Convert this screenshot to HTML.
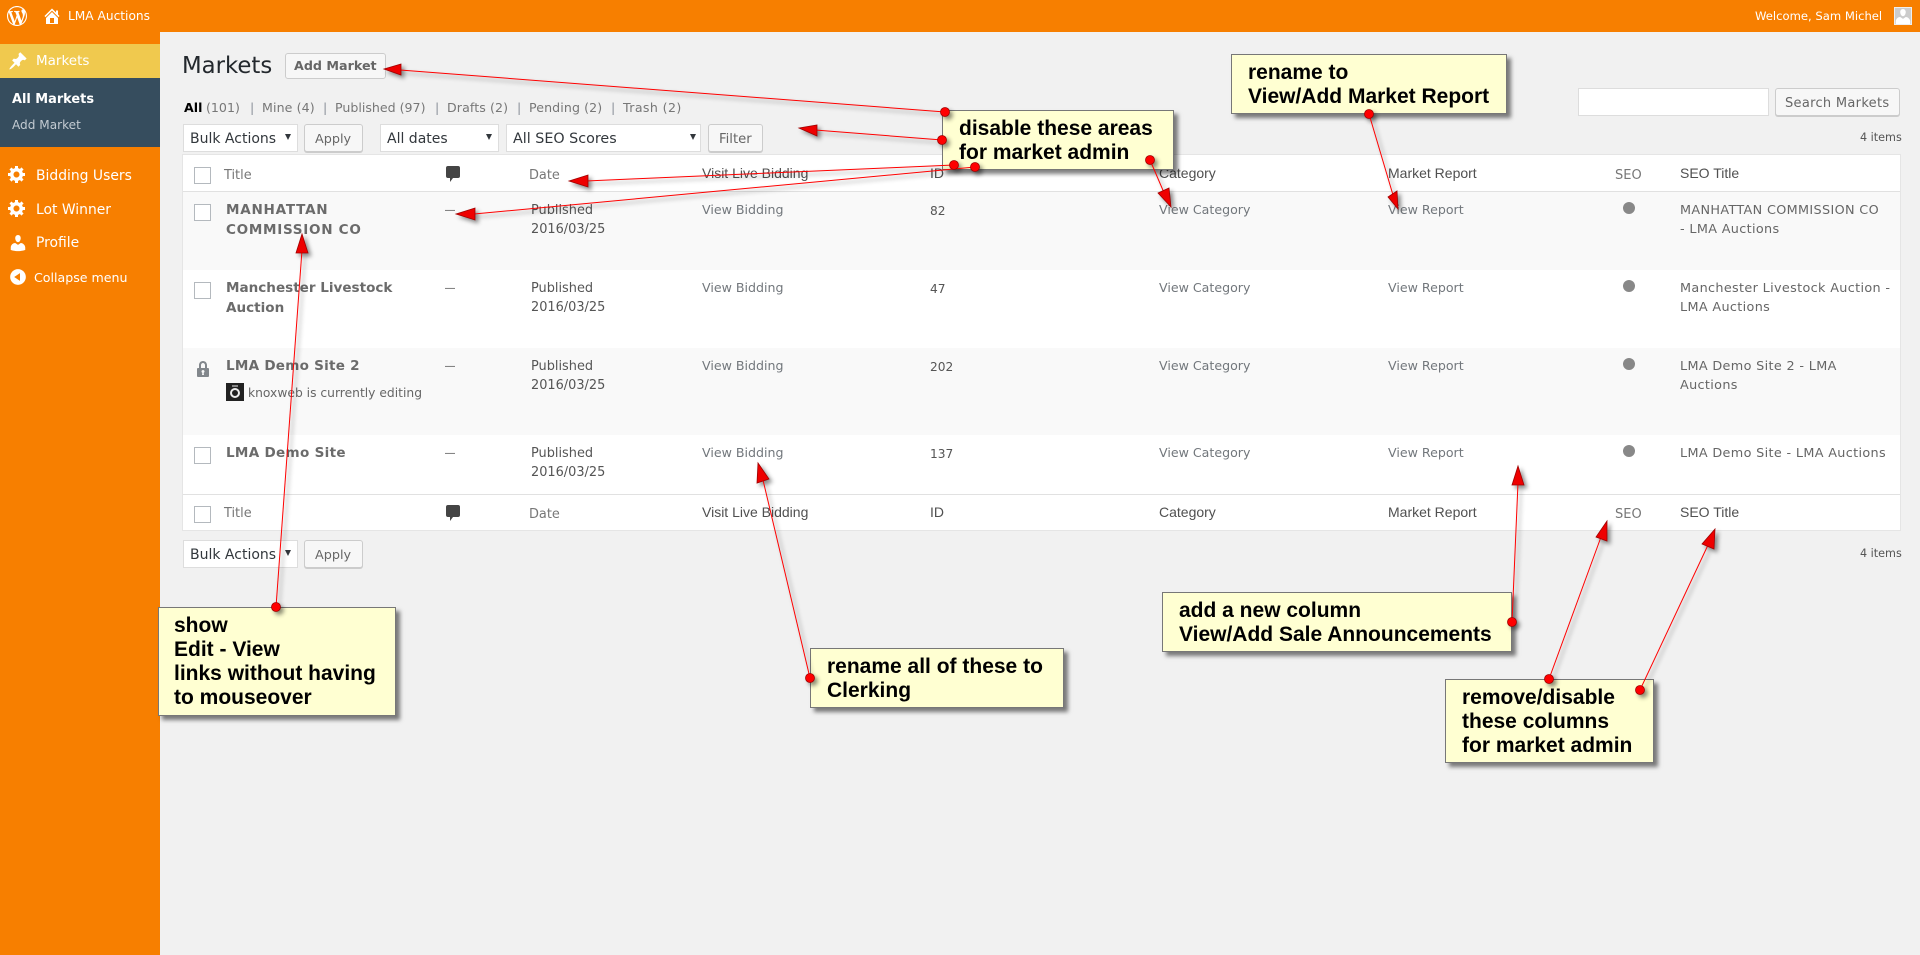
<!DOCTYPE html>
<html lang="en"><head><meta charset="utf-8"><title>Markets</title>
<style>
html,body{margin:0;padding:0;width:1920px;height:955px;overflow:hidden;background:#f1f1f1}
body{position:relative;font-family:"DejaVu Sans","Liberation Sans",sans-serif;font-size:12.7px;color:#555}
.a,.t{position:absolute}
.t{white-space:nowrap;line-height:20px}
.w{color:#fff}
.l{color:#72777c;font-size:12.6px}
.d{font-size:12.9px;color:#555}
.n{font-size:12.2px;color:#555}
.b{font-weight:bold;font-size:13.55px;color:#6b6b6b}
.h{font-family:"Liberation Sans",sans-serif;font-size:14px;color:#505050}
.g{color:#777;font-size:12.9px}
.s{font-size:12.8px;letter-spacing:.34px;color:#666}
.c{position:absolute;width:15px;height:15px;border:1px solid #b4b9be;background:#fff;left:194px}
.sub{font-size:12.6px;color:#777}
.bar{color:#8a9099;font-size:12.6px}
.sel{position:absolute;height:26px;background:#fff;border:1px solid #ddd;top:124px}
.sel i{position:absolute;top:9px;width:0;height:0;border-left:3px solid transparent;border-right:3px solid transparent;border-top:6px solid #32373c}
.sx{font-size:14px;color:#32373c}
.btn{position:absolute;box-sizing:border-box;background:#f7f7f7;border:1px solid #ccc;border-radius:3px;box-shadow:0 1px 0 #ccc;height:28px}
.box{position:absolute;box-sizing:border-box;background:#ffffd2;border:1px solid #777;box-shadow:4px 4px 4px rgba(0,0,0,.5);font:bold 21px/24px "Liberation Sans",sans-serif;color:#000;white-space:nowrap;padding-top:6px;padding-left:16px}
svg{position:absolute}
</style></head><body>

<!-- admin bar -->
<div class="a" style="left:0;top:0;width:1920px;height:32px;background:#f77f00"></div>
<div class="a" style="left:0;top:0;width:160px;height:955px;background:#f77f00"></div>
<svg style="left:7px;top:6px" width="20" height="20" viewBox="0 0 20 20"><path fill="#fff" d="M20 10c0-5.51-4.49-10-10-10C4.48 0 0 4.49 0 10c0 5.52 4.48 10 10 10 5.51 0 10-4.48 10-10zM7.78 15.37L4.37 6.22c.55-.02 1.17-.08 1.17-.08.5-.06.44-1.13-.06-1.11 0 0-1.45.11-2.37.11-.18 0-.37 0-.58-.01C4.12 2.69 6.87 1.11 10 1.11c2.33 0 4.45.87 6.05 2.34-.68-.11-1.65.39-1.65 1.58 0 .74.45 1.36.9 2.1.35.61.55 1.36.55 2.46 0 1.49-1.4 5-1.4 5l-3.03-8.37c.54-.02.82-.17.82-.17.5-.05.44-1.25-.06-1.22 0 0-1.44.12-2.38.12-.87 0-2.33-.12-2.33-.12-.5-.03-.56 1.2-.06 1.22l.92.08 1.26 3.41zM17.41 10c.24-.64.74-1.87.43-4.25.7 1.29 1.05 2.71 1.05 4.25 0 3.29-1.73 6.24-4.4 7.78.97-2.59 1.94-5.2 2.92-7.78zM6.1 18.09C3.12 16.65 1.11 13.53 1.11 10c0-1.3.23-2.48.72-3.59C3.25 10.3 4.67 14.2 6.1 18.09zm4.03-6.63l2.58 6.98c-.86.29-1.76.45-2.71.45-.79 0-1.57-.11-2.29-.33.81-2.38 1.62-4.74 2.42-7.1z"/></svg>
<svg style="left:42px;top:6px" width="20" height="20" viewBox="0 0 20 20"><path fill="#fff" d="M16 8.5l1.53 1.53-1.06 1.06L10 4.62l-6.47 6.47-1.06-1.06L10 2.5l4 4v-2h2v4zm-6-2.46l6 5.99V18H4v-5.97zM12 17v-5H8v5h4z"/></svg>
<div class="t w" style="left:68px;top:6px;font-size:12.2px">LMA Auctions</div>
<div class="t w" style="left:1755px;top:6px;font-size:11.6px">Welcome, Sam Michel</div>
<div class="a" style="left:1894px;top:7px;width:16px;height:16px;background:#ccc;border:1px solid #eee;overflow:hidden"><svg style="left:-2px;top:-1px" width="20" height="20" viewBox="0 0 20 20"><path fill="#fff" d="M10 9.25c-2.27 0-2.73-3.44-2.73-3.44C7 4.02 7.82 2 9.97 2c2.16 0 2.98 2.02 2.71 3.81 0 0-.41 3.44-2.68 3.44zm0 2.57L12.72 10c2.39 0 4.52 2.33 4.52 4.53v2.49s-3.65 1.13-7.24 1.13c-3.65 0-7.24-1.13-7.24-1.13v-2.49c0-2.25 1.94-4.48 4.47-4.48z"/></svg></div>

<!-- sidebar -->
<div class="a" style="left:0;top:44px;width:160px;height:34px;background:#f0c94e"></div>
<div class="a" style="left:0;top:78px;width:160px;height:69px;background:#364d5e"></div>
<svg style="left:8px;top:51px" width="20" height="20" viewBox="0 0 20 20"><path fill="#fff" d="M10.44 3.02l1.82-1.82 6.36 6.35-1.83 1.82c-1.05-.68-2.48-.57-3.41.36l-.75.75c-.92.93-1.04 2.35-.35 3.41l-1.83 1.82-2.41-2.41-2.8 2.79c-.42.42-3.38 2.71-3.8 2.29s1.86-3.39 2.28-3.81l2.79-2.79L4.1 9.36l1.83-1.82c1.05.69 2.48.57 3.4-.36l.75-.75c.93-.92 1.05-2.35.36-3.41z"/></svg>
<div class="t w" style="left:36px;top:51px;font-size:13.5px">Markets</div>
<div class="t w" style="left:12px;top:90px;font-size:12.9px;font-weight:bold">All Markets</div>
<div class="t" style="left:12px;top:115px;font-size:12.1px;color:#c3cbd2">Add Market</div>
<svg style="left:7px;top:164px" width="20" height="20" viewBox="0 0 20 20"><path fill="#fff" d="M18 12h-2.18c-.17.7-.44 1.35-.81 1.93l1.54 1.54-2.1 2.1-1.54-1.54c-.58.36-1.23.63-1.91.79V19H8v-2.18c-.68-.16-1.33-.43-1.91-.79l-1.54 1.54-2.12-2.12 1.54-1.54c-.36-.58-.63-1.23-.79-1.91H1V9.03h2.17c.16-.7.44-1.35.8-1.94L2.43 5.55l2.1-2.1 1.54 1.54c.58-.37 1.24-.64 1.93-.81V2h3v2.18c.68.16 1.33.43 1.91.79l1.54-1.54 2.12 2.12-1.54 1.54c.36.59.64 1.24.8 1.94H18V12zm-8.5 1.5c1.66 0 3-1.34 3-3s-1.34-3-3-3-3 1.34-3 3 1.34 3 3 3z"/></svg>
<div class="t w" style="left:36px;top:166px;font-size:13.9px">Bidding Users</div>
<svg style="left:7px;top:198px" width="20" height="20" viewBox="0 0 20 20"><path fill="#fff" d="M18 12h-2.18c-.17.7-.44 1.35-.81 1.93l1.54 1.54-2.1 2.1-1.54-1.54c-.58.36-1.23.63-1.91.79V19H8v-2.18c-.68-.16-1.33-.43-1.91-.79l-1.54 1.54-2.12-2.12 1.54-1.54c-.36-.58-.63-1.23-.79-1.91H1V9.03h2.17c.16-.7.44-1.35.8-1.94L2.43 5.55l2.1-2.1 1.54 1.54c.58-.37 1.24-.64 1.93-.81V2h3v2.18c.68.16 1.33.43 1.91.79l1.54-1.54 2.12 2.12-1.54 1.54c.36.59.64 1.24.8 1.94H18V12zm-8.5 1.5c1.66 0 3-1.34 3-3s-1.34-3-3-3-3 1.34-3 3 1.34 3 3 3z"/></svg>
<div class="t w" style="left:36px;top:200px;font-size:13.9px">Lot Winner</div>
<svg style="left:8px;top:233px" width="20" height="20" viewBox="0 0 20 20"><path fill="#fff" d="M10 9.25c-2.27 0-2.73-3.44-2.73-3.44C7 4.02 7.82 2 9.97 2c2.16 0 2.98 2.02 2.71 3.81 0 0-.41 3.44-2.68 3.44zm0 2.57L12.72 10c2.39 0 4.52 2.33 4.52 4.53v2.49s-3.65 1.13-7.24 1.13c-3.65 0-7.24-1.13-7.24-1.13v-2.49c0-2.25 1.94-4.48 4.47-4.48z"/></svg>
<div class="t w" style="left:36px;top:233px;font-size:13.9px">Profile</div>
<svg style="left:8px;top:267px" width="20" height="20" viewBox="0 0 20 20"><path fill="#fff" d="M10 2.16c4.33 0 7.84 3.51 7.84 7.84s-3.51 7.84-7.84 7.84S2.16 14.33 2.16 10 5.71 2.16 10 2.16zm2 11.72V6.12L6.18 9.97z"/></svg>
<div class="t w" style="left:34px;top:268px;font-size:12.6px">Collapse menu</div>

<!-- heading -->
<div class="t" style="left:182px;top:53px;font-size:22.8px;line-height:26px;color:#23282d">Markets</div>
<div class="btn" style="left:285px;top:53px;width:101px;height:26px;box-shadow:none"></div>
<div class="t" style="left:294px;top:56px;font-size:12.7px;font-weight:bold;color:#666">Add Market</div>

<!-- subsub -->
<div class="t" style="left:184px;top:98px;font-size:12.6px;font-weight:bold;color:#000">All</div>
<div class="t sub" style="left:206px;top:98px">(101)</div><div class="t bar" style="left:250px;top:98px">|</div>
<div class="t sub" style="left:262px;top:98px;letter-spacing:.1px">Mine (4)</div><div class="t bar" style="left:323px;top:98px">|</div>
<div class="t sub" style="left:335px;top:98px">Published (97)</div><div class="t bar" style="left:435px;top:98px">|</div>
<div class="t sub" style="left:447px;top:98px;letter-spacing:.1px">Drafts (2)</div><div class="t bar" style="left:517px;top:98px">|</div>
<div class="t sub" style="left:529px;top:98px;letter-spacing:.1px">Pending (2)</div><div class="t bar" style="left:611px;top:98px">|</div>
<div class="t sub" style="left:623px;top:98px;letter-spacing:.4px">Trash (2)</div>

<!-- search -->
<div class="a" style="left:1578px;top:88px;width:189px;height:26px;background:#fff;border:1px solid #ddd"></div>
<div class="btn" style="left:1775px;top:88px;width:125px"></div>
<div class="t" style="left:1785px;top:94px;font-size:13px;letter-spacing:.3px;color:#666">Search Markets</div>
<div class="t" style="left:1860px;top:128px;font-size:11.2px;color:#555">4 items</div>

<!-- toolbar top -->
<div class="sel" style="left:183px;width:113px"><i style="left:101px"></i></div>
<div class="t sx" style="left:190px;top:129px">Bulk Actions</div>
<div class="btn" style="left:304px;top:124px;width:59px"></div>
<div class="t" style="left:315px;top:130px;font-size:12.8px;color:#666">Apply</div>
<div class="sel" style="left:380px;width:117px"><i style="left:105px"></i></div>
<div class="t sx" style="left:387px;top:129px">All dates</div>
<div class="sel" style="left:506px;width:193px"><i style="left:183px"></i></div>
<div class="t sx" style="left:513px;top:129px;font-size:14.3px">All SEO Scores</div>
<div class="btn" style="left:708px;top:124px;width:55px"></div>
<div class="t" style="left:719px;top:130px;font-size:13.2px;color:#666">Filter</div>

<!-- table -->
<div class="a" style="left:183px;top:155px;width:1717px;height:375px;background:#fff;box-shadow:0 0 0 1px #e5e5e5"></div>
<div class="a" style="left:183px;top:191px;width:1717px;height:1px;background:#e1e1e1"></div>
<div class="a" style="left:183px;top:192px;width:1717px;height:78px;background:#f9f9f9"></div>
<div class="a" style="left:183px;top:348px;width:1717px;height:87px;background:#f9f9f9"></div>
<div class="a" style="left:183px;top:494px;width:1717px;height:1px;background:#e1e1e1"></div>

<!-- head -->
<div class="c" style="top:167px"></div>
<div class="t g" style="left:224px;top:166px">Title</div>
<svg style="left:446px;top:166px" width="14" height="16" viewBox="0 0 14 16"><path fill="#444" d="M2 0h10a2 2 0 0 1 2 2v8a2 2 0 0 1-2 2H7l-3 4v-4H2a2 2 0 0 1-2-2V2a2 2 0 0 1 2-2z"/></svg>
<div class="t g" style="left:529px;top:166px">Date</div>
<div class="t h" style="left:702px;top:163px">Visit Live Bidding</div>
<div class="t h" style="left:930px;top:163px">ID</div>
<div class="t h" style="left:1159px;top:163px">Category</div>
<div class="t h" style="left:1388px;top:163px">Market Report</div>
<div class="t g" style="left:1615px;top:166px;font-size:13px">SEO</div>
<div class="t h" style="left:1680px;top:163px">SEO Title</div>

<!-- row 1 -->
<div class="c" style="top:204px"></div>
<div class="t b" style="left:226px;top:200px;letter-spacing:.75px">MANHATTAN</div><div class="t b" style="left:226px;top:220px;letter-spacing:.7px">COMMISSION CO</div>
<div class="t" style="left:445px;top:201px;font:10px/20px 'Liberation Sans',sans-serif;color:#444">—</div>
<div class="t d" style="left:531px;top:201px">Published</div><div class="t d" style="left:531px;top:220px">2016/03/25</div>
<div class="t l" style="left:702px;top:200px">View Bidding</div>
<div class="t n" style="left:930px;top:201px">82</div>
<div class="t l" style="left:1159px;top:200px">View Category</div>
<div class="t l" style="left:1388px;top:200px">View Report</div>
<div class="a" style="left:1623px;top:202px;width:12px;height:12px;border-radius:50%;background:#888"></div>
<div class="t s" style="left:1680px;top:201px">MANHATTAN COMMISSION CO</div><div class="t s" style="left:1680px;top:220px">- LMA Auctions</div>

<!-- row 2 -->
<div class="c" style="top:282px"></div>
<div class="t b" style="left:226px;top:278px">Manchester Livestock</div><div class="t b" style="left:226px;top:298px">Auction</div>
<div class="t" style="left:445px;top:279px;font:10px/20px 'Liberation Sans',sans-serif;color:#444">—</div>
<div class="t d" style="left:531px;top:279px">Published</div><div class="t d" style="left:531px;top:298px">2016/03/25</div>
<div class="t l" style="left:702px;top:278px">View Bidding</div>
<div class="t n" style="left:930px;top:279px">47</div>
<div class="t l" style="left:1159px;top:278px">View Category</div>
<div class="t l" style="left:1388px;top:278px">View Report</div>
<div class="a" style="left:1623px;top:280px;width:12px;height:12px;border-radius:50%;background:#888"></div>
<div class="t s" style="left:1680px;top:279px">Manchester Livestock Auction -</div><div class="t s" style="left:1680px;top:298px">LMA Auctions</div>

<!-- row 3 -->
<svg style="left:193px;top:359px" width="20" height="20" viewBox="0 0 20 20" preserveAspectRatio="none"><path fill="#82878c" d="M14 9h1c.55 0 1 .45 1 1v7c0 .55-.45 1-1 1H5c-.55 0-1-.45-1-1v-7c0-.55.45-1 1-1h1V6c0-2.2 1.8-4 4-4s4 1.8 4 4v3zm-2 0V6c0-1.1-.9-2-2-2s-2 .9-2 2v3h4zm-1 7l-.36-2.15c.51-.24.86-.75.86-1.35 0-.83-.67-1.5-1.5-1.5s-1.5.67-1.5 1.5c0 .6.35 1.11.86 1.35L9 16h2z"/></svg>
<div class="t b" style="left:226px;top:356px;letter-spacing:.25px">LMA Demo Site 2</div>
<svg style="left:226px;top:383px" width="18" height="18" viewBox="0 0 18 18"><rect width="18" height="18" fill="#222"/><circle cx="9" cy="10" r="4" fill="none" stroke="#eee" stroke-width="2"/><rect x="6" y="2" width="6" height="2" fill="#888"/></svg>
<div class="t" style="left:248px;top:383px;font-size:12.3px;color:#666">knoxweb is currently editing</div>
<div class="t" style="left:445px;top:357px;font:10px/20px 'Liberation Sans',sans-serif;color:#444">—</div>
<div class="t d" style="left:531px;top:357px">Published</div><div class="t d" style="left:531px;top:376px">2016/03/25</div>
<div class="t l" style="left:702px;top:356px">View Bidding</div>
<div class="t n" style="left:930px;top:357px">202</div>
<div class="t l" style="left:1159px;top:356px">View Category</div>
<div class="t l" style="left:1388px;top:356px">View Report</div>
<div class="a" style="left:1623px;top:358px;width:12px;height:12px;border-radius:50%;background:#888"></div>
<div class="t s" style="left:1680px;top:357px">LMA Demo Site 2 - LMA</div><div class="t s" style="left:1680px;top:376px">Auctions</div>

<!-- row 4 -->
<div class="c" style="top:447px"></div>
<div class="t b" style="left:226px;top:443px;letter-spacing:.3px">LMA Demo Site</div>
<div class="t" style="left:445px;top:444px;font:10px/20px 'Liberation Sans',sans-serif;color:#444">—</div>
<div class="t d" style="left:531px;top:444px">Published</div><div class="t d" style="left:531px;top:463px">2016/03/25</div>
<div class="t l" style="left:702px;top:443px">View Bidding</div>
<div class="t n" style="left:930px;top:444px">137</div>
<div class="t l" style="left:1159px;top:443px">View Category</div>
<div class="t l" style="left:1388px;top:443px">View Report</div>
<div class="a" style="left:1623px;top:445px;width:12px;height:12px;border-radius:50%;background:#888"></div>
<div class="t s" style="left:1680px;top:444px">LMA Demo Site - LMA Auctions</div>

<!-- foot -->
<div class="c" style="top:506px"></div>
<div class="t g" style="left:224px;top:504px">Title</div>
<svg style="left:446px;top:505px" width="14" height="16" viewBox="0 0 14 16"><path fill="#444" d="M2 0h10a2 2 0 0 1 2 2v8a2 2 0 0 1-2 2H7l-3 4v-4H2a2 2 0 0 1-2-2V2a2 2 0 0 1 2-2z"/></svg>
<div class="t g" style="left:529px;top:505px">Date</div>
<div class="t h" style="left:702px;top:502px">Visit Live Bidding</div>
<div class="t h" style="left:930px;top:502px">ID</div>
<div class="t h" style="left:1159px;top:502px">Category</div>
<div class="t h" style="left:1388px;top:502px">Market Report</div>
<div class="t g" style="left:1615px;top:505px;font-size:13px">SEO</div>
<div class="t h" style="left:1680px;top:502px">SEO Title</div>

<!-- toolbar bottom -->
<div class="sel" style="left:183px;width:113px;top:540px"><i style="left:101px"></i></div>
<div class="t sx" style="left:190px;top:545px">Bulk Actions</div>
<div class="btn" style="left:304px;top:540px;width:59px"></div>
<div class="t" style="left:315px;top:546px;font-size:12.8px;color:#666">Apply</div>
<div class="t" style="left:1860px;top:544px;font-size:11.2px;color:#555">4 items</div>

<!-- annotation boxes -->
<div class="box" style="left:942px;top:110px;width:232px;height:60px">disable these areas<br>for market admin</div>
<div class="box" style="left:1231px;top:54px;width:276px;height:60px">rename to<br>View/Add Market Report</div>
<div class="box" style="left:158px;top:607px;width:238px;height:109px;padding-left:15px">show<br>Edit - View<br>links without having<br>to mouseover</div>
<div class="box" style="left:810px;top:648px;width:254px;height:60px">rename all of these to<br>Clerking</div>
<div class="box" style="left:1162px;top:592px;width:350px;height:60px">add a new column<br>View/Add Sale Announcements</div>
<div class="box" style="left:1445px;top:679px;width:209px;height:84px">remove/disable<br>these columns<br>for market admin</div>

<!-- arrows -->
<svg style="left:0;top:0" width="1920" height="955" viewBox="0 0 1920 955">
<g style="filter:drop-shadow(3px 3px 2px rgba(0,0,0,.45))" stroke-width="1">
<g stroke="#f00">
<line x1="945" y1="112" x2="400" y2="70"/>
<line x1="942" y1="140" x2="815" y2="130"/>
<line x1="954" y1="165" x2="586" y2="181"/>
<line x1="975" y1="167" x2="474" y2="214"/>
<line x1="1150" y1="160" x2="1165" y2="195"/>
<line x1="1369" y1="114" x2="1393" y2="195"/>
<line x1="276" y1="607" x2="302" y2="250"/>
<line x1="810" y1="678" x2="763" y2="480"/>
<line x1="1512" y1="622" x2="1518" y2="483"/>
<line x1="1549" y1="679" x2="1601" y2="537"/>
<line x1="1640" y1="690" x2="1708" y2="545"/>
</g>
<g fill="#ee0000" stroke="#a00000" stroke-width=".8">
<polygon points="384,69 401,64 401,75"/>
<polygon points="799,128 817,125 817,136"/>
<polygon points="569,181 588,175 588,187"/>
<polygon points="456,214 475,208 475,220"/>
<polygon points="1171,207 1158,193 1169,188"/>
<polygon points="1398,209 1388,197 1397,191"/>
<polygon points="302,234 296,253 308,253"/>
<polygon points="758,463 757,483 769,479"/>
<polygon points="1518,466 1512,485 1524,485"/>
<polygon points="1607,521 1596,537 1607,541"/>
<polygon points="1715,529 1702,544 1714,549"/>
</g>
<g fill="#f00" stroke="#a00000" stroke-width=".8">
<circle cx="945" cy="112" r="4.5"/>
<circle cx="942" cy="140" r="4.5"/>
<circle cx="954" cy="165" r="4.5"/>
<circle cx="975" cy="167" r="4.5"/>
<circle cx="1150" cy="160" r="4.5"/>
<circle cx="1369" cy="114" r="4.5"/>
<circle cx="276" cy="607" r="4.5"/>
<circle cx="810" cy="678" r="4.5"/>
<circle cx="1512" cy="622" r="4.5"/>
<circle cx="1549" cy="679" r="4.5"/>
<circle cx="1640" cy="690" r="4.5"/>
</g>
</g>
</svg>
</body></html>
